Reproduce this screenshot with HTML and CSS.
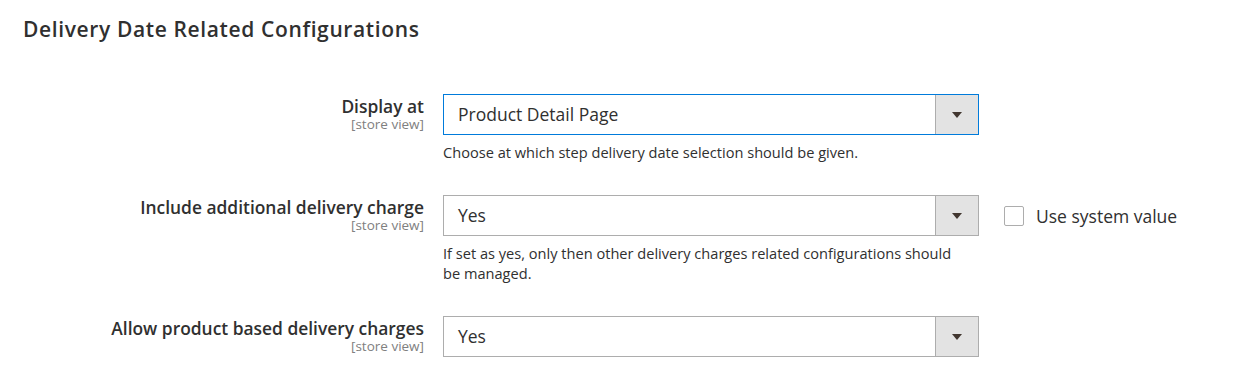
FILE: index.html
```html
<!DOCTYPE html>
<html lang="en">
<head>
    <meta charset="UTF-8">
    <meta name="viewport" content="width=device-width, initial-scale=1.0">
    <title>Delivery Date Related Configurations</title>
    <link rel="stylesheet" href="styles.css">
</head>
<body>
    <div class="section">
        <h2 class="section-title">Delivery Date Related Configurations</h2>

        <div class="field-row">
            <div class="field-label">
                <span class="label-text">Display at</span>
                <span class="scope">[store view]</span>
            </div>
            <div class="field-control">
                <div class="select focused">
                    <span class="select-value">Product Detail Page</span>
                    <span class="select-arrow"></span>
                </div>
                <p class="note">Choose at which step delivery date selection should be given.</p>
            </div>
            <div class="field-extra"></div>
        </div>

        <div class="field-row">
            <div class="field-label">
                <span class="label-text">Include additional delivery charge</span>
                <span class="scope">[store view]</span>
            </div>
            <div class="field-control">
                <div class="select">
                    <span class="select-value">Yes</span>
                    <span class="select-arrow"></span>
                </div>
                <p class="note">If set as yes, only then other delivery charges related configurations should be managed.</p>
            </div>
            <div class="field-extra">
                <label class="system-value">
                    <span class="checkbox"></span>
                    Use system value
                </label>
            </div>
        </div>

        <div class="field-row">
            <div class="field-label">
                <span class="label-text">Allow product based delivery charges</span>
                <span class="scope">[store view]</span>
            </div>
            <div class="field-control">
                <div class="select">
                    <span class="select-value">Yes</span>
                    <span class="select-arrow"></span>
                </div>
            </div>
            <div class="field-extra"></div>
        </div>
    </div>
</body>
</html>
```

FILE: styles.css
```css
body {
    font-family: "Open Sans", "Noto Sans", sans-serif;
    margin: 0;
    padding: 0;
    background-color: #fff;
    color: #303030;
}
.section {
    padding: 14px 0 0 23px;
}
.section-title {
    margin: 0 0 50px;
    font-size: 21px;
    font-weight: 600;
    line-height: 30px;
    color: #303030;
    letter-spacing: 0.03em;
}
.field-row {
    display: grid;
    grid-template-columns: 401px 536px auto;
    column-gap: 19px;
    margin-bottom: 33px;
}
.field-label {
    display: flex;
    flex-direction: column;
    align-items: flex-end;
    text-align: right;
    padding-top: 1px;
}
.label-text {
    font-size: 17.4px;
    font-weight: 600;
    line-height: 22px;
    color: #303030;
}
.scope {
    font-size: 13.5px;
    line-height: 14px;
    color: #808080;
}
.select {
    display: flex;
    height: 41px;
    box-sizing: border-box;
    border: 1px solid #adadad;
    background-color: #fff;
}
.select.focused {
    border-color: #007bdb;
}
.select-value {
    flex: 1;
    padding-left: 14px;
    font-size: 17.5px;
    line-height: 39px;
    color: #303030;
}
.select-arrow {
    width: 42px;
    border-left: 1px solid #adadad;
    background-color: #e3e3e3;
    position: relative;
}
.select-arrow::after {
    content: "";
    position: absolute;
    left: 16px;
    top: 17px;
    border-left: 5px solid transparent;
    border-right: 5px solid transparent;
    border-top: 6px solid #41362f;
}
.note {
    margin: 7px 0 0;
    padding-right: 14px;
    font-size: 14.6px;
    line-height: 20px;
    color: #303030;
}
.field-extra {
    padding-left: 6px;
}
.system-value {
    display: flex;
    align-items: center;
    gap: 12px;
    height: 41px;
    font-size: 17.5px;
    color: #303030;
}
.checkbox {
    width: 20px;
    height: 20px;
    box-sizing: border-box;
    border: 1px solid #adadad;
    border-radius: 2px;
    background-color: #fff;
}
```
